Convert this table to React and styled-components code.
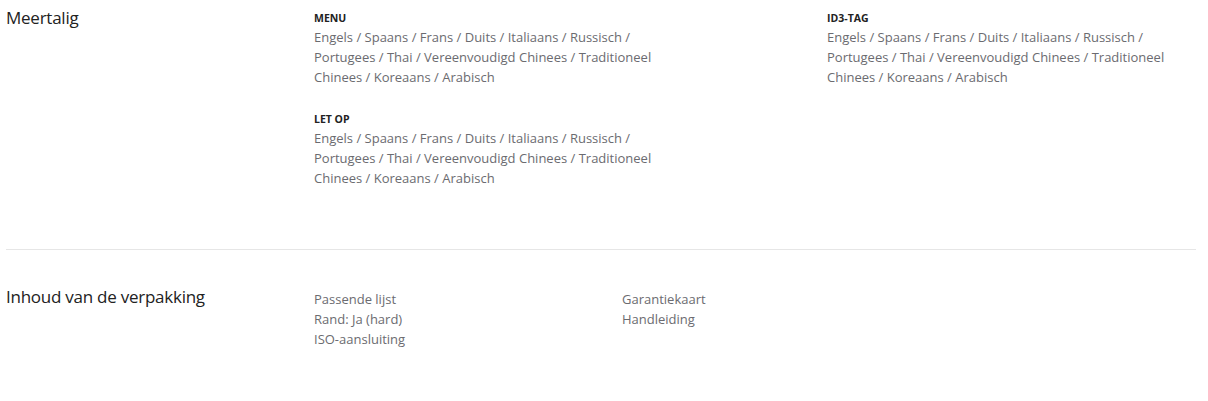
import React from 'react';
import styled, { createGlobalStyle } from 'styled-components';

const GlobalStyle = createGlobalStyle`
  body {
    margin: 0;
    background: #fff;
    font-family: "Open Sans", "Noto Sans", sans-serif;
  }
`;

const Page = styled.div`
  width: 1190px;
  padding: 0 6px;
`;

const Section = styled.section`
  display: flex;
  padding: ${(p) => p.$pad};
  border-bottom: ${(p) => (p.$divider ? '1px solid #e6e6e6' : 'none')};
`;

const Title = styled.h2`
  width: 308px;
  flex-shrink: 0;
  margin: 0;
  font-size: 17px;
  font-weight: 400;
  line-height: 22px;
  color: #222;
  letter-spacing: -0.25px;
  padding-top: ${(p) => p.$offset || '0px'};
`;

const Grid = styled.div`
  display: grid;
  grid-template-columns: ${(p) => p.$cols};
  column-gap: ${(p) => p.$gap};
  align-items: start;
  padding-top: ${(p) => p.$offset || '0px'};
`;

const Column = styled.div`
  display: flex;
  flex-direction: column;
  gap: 24px;
`;

const Spec = styled.div`
  display: flex;
  flex-direction: column;
`;

const Label = styled.h3`
  margin: 0;
  font-size: 10.5px;
  font-weight: 700;
  line-height: 17px;
  color: #222;
`;

const Value = styled.div`
  font-size: 13px;
  line-height: 20px;
  color: #6b6b70;
`;

const languages =
  'Engels / Spaans / Frans / Duits / Italiaans / Russisch / Portugees / Thai / Vereenvoudigd Chinees / Traditioneel Chinees / Koreaans / Arabisch';

export default function App() {
  return (
    <Page>
      <GlobalStyle />
      <Section $divider $pad="6px 0 61px">
        <Title $offset="1px">Meertalig</Title>
        <Grid $cols="355px 370px" $gap="158px" $offset="4px">
          <Column>
            <Spec>
              <Label>MENU</Label>
              <Value>{languages}</Value>
            </Spec>
            <Spec>
              <Label>LET OP</Label>
              <Value>{languages}</Value>
            </Spec>
          </Column>
          <Column>
            <Spec>
              <Label>ID3-TAG</Label>
              <Value>{languages}</Value>
            </Spec>
          </Column>
        </Grid>
      </Section>
      <Section $pad="36px 0 40px">
        <Title>Inhoud van de verpakking</Title>
        <Grid $cols="308px 308px" $gap="0px" $offset="3px">
          <Column>
            <Spec>
              <Value>Passende lijst</Value>
              <Value>Rand: Ja (hard)</Value>
              <Value>ISO-aansluiting</Value>
            </Spec>
          </Column>
          <Column>
            <Spec>
              <Value>Garantiekaart</Value>
              <Value>Handleiding</Value>
            </Spec>
          </Column>
        </Grid>
      </Section>
    </Page>
  );
}
